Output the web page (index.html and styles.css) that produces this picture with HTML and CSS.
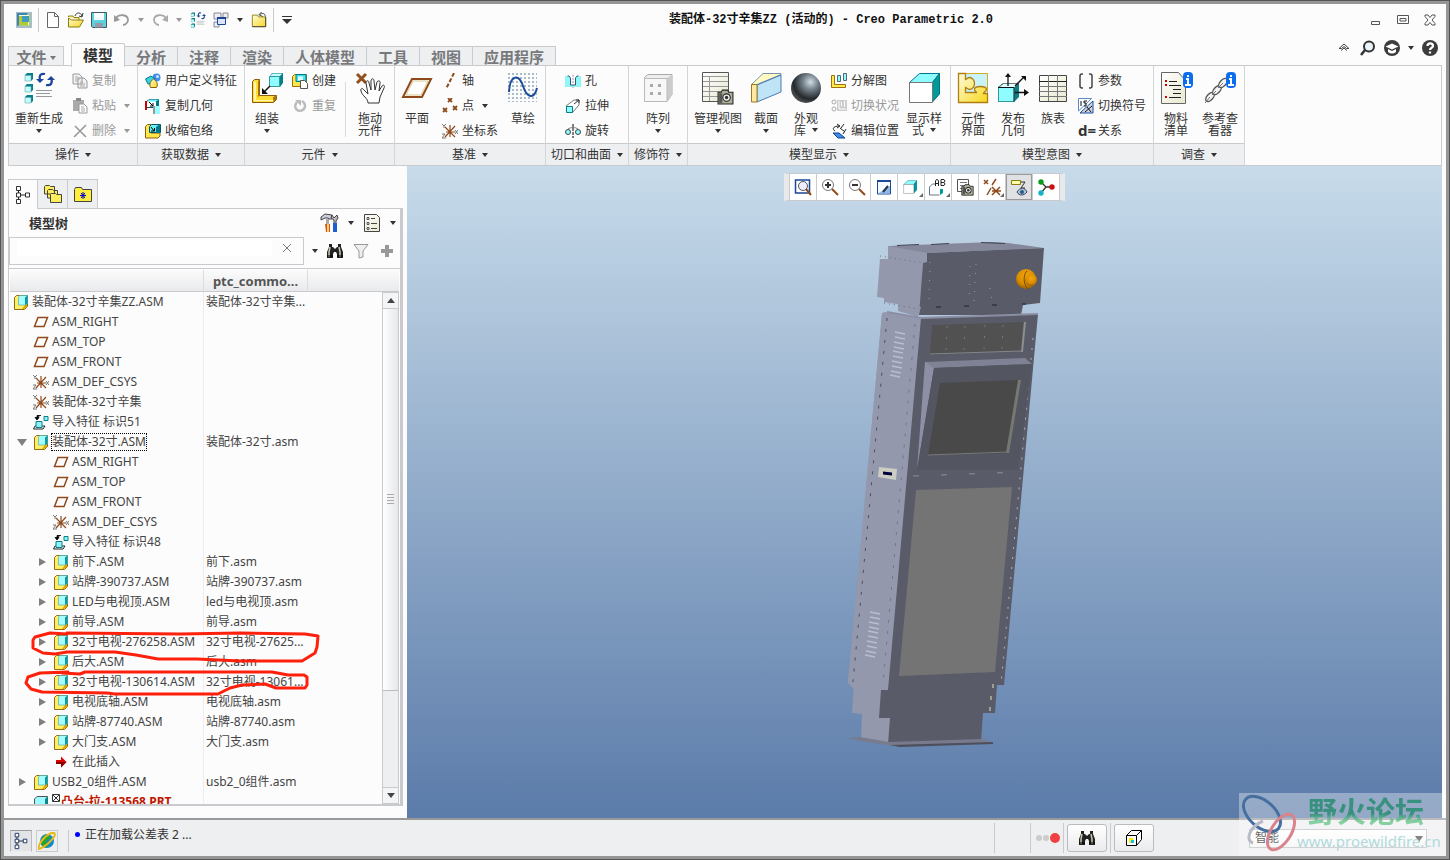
FILE: index.html
```html
<!DOCTYPE html>
<html lang="zh-CN">
<head>
  <meta charset="UTF-8">
  <meta name="viewport" content="width=device-width, initial-scale=1.0">
  <title>装配体-32寸辛集ZZ (活动的) - Creo Parametric 2.0</title>
  <link rel="stylesheet" href="styles.css">
</head>
<body>
  <!-- Shared icons -->
  <svg class="defs" aria-hidden="true">
    <defs>
      <linearGradient id="gold" x1="0" y1="0" x2="1" y2="1"><stop offset="0" stop-color="#fffbe0"/><stop offset="1" stop-color="#f7d81a"/></linearGradient>
      <linearGradient id="grid" x1="0" y1="0" x2="1" y2="1"><stop offset="0" stop-color="#fff"/><stop offset="1" stop-color="#e8e8d0"/></linearGradient>
      <radialGradient id="ball" cx=".65" cy=".3" r=".75"><stop offset="0" stop-color="#d3dde3"/><stop offset=".35" stop-color="#73808a"/><stop offset=".75" stop-color="#25292c"/><stop offset="1" stop-color="#555"/></radialGradient>
      <radialGradient id="amber" cx=".5" cy=".35" r=".7"><stop offset="0" stop-color="#f5a80c"/><stop offset=".6" stop-color="#d98c00"/><stop offset="1" stop-color="#8a5800"/></radialGradient>
      <pattern id="dots" width="4" height="4" patternUnits="userSpaceOnUse"><rect x="1" y="1" width="2" height="2" fill="#a9bccb"/></pattern>
    </defs>
    <symbol id="asm" viewBox="0 0 16 16"><path d="M1.500 3.500l2-2h11v11l-3 3h-10z" fill="#ffee66" stroke="#9a6a10"/><path d="M12 11l2-2v4l-3 2H9z" fill="#e2a800"/><path d="M5.500 3.500l1-2h8v8l-2 1.500h-7z" fill="#a5fdff" stroke="#3aa5ad" stroke-width=".6"/><path d="M12 3.500l2.500-2v8L12 11z" fill="#0a98a2"/></symbol>
    <symbol id="plane" viewBox="0 0 16 16"><path d="M5 3.500h9.500L11 12.500H1.500z" fill="none" stroke="#8f4a1c" stroke-width="1.500"/></symbol>
    <symbol id="csys" viewBox="0 0 16 16"><path d="M8 2v12M3 4l10 10M13 3L3 14M4 9h9" stroke="#8f4a1c" stroke-width="1.200"/><path d="M0 1l2 2 2-2M2 3v2M0 11h3l-3 4h4M13 7l3 4M16 7l-3 4" fill="none" stroke="#777"/></symbol>
    <symbol id="import" viewBox="0 0 16 16"><path d="M2 12L.5 15H10l2-3z" fill="#fff" stroke="#222"/><path d="M3 7.500h6v6H3z" fill="#8ff3f8" stroke="#067f88"/><path d="M11 2.500h4v4h-4z" fill="#8ff3f8" stroke="#067f88"/><path d="M8 1.500H4v2M2 3.500h4L4 6z" fill="#000" stroke="#000" stroke-width=".8"/></symbol>
    <symbol id="part" viewBox="0 0 16 16"><path d="M1.500 5L4 2.500h10.500V16h-13z" fill="#9cfbff" stroke="#555"/><path d="M12 5l2.500-2.500V16H12z" fill="#008f98"/></symbol>
    <symbol id="insert" viewBox="0 0 16 16"><path d="M3 6h5V2.500l5.500 5.500L8 13.500V10H3z" fill="#e00000"/><path d="M3 8h10.500L8 13.500V10H3z" fill="#8a0000"/></symbol>
    <symbol id="camera" viewBox="0 0 16 16"><path d="M1 4h3l1-2h5l1 2h4v11H1z" fill="#aeb09a" stroke="#222"/><path d="M2 5h3v9H2z" fill="#555"/><circle cx="9" cy="9" r="4" fill="#222"/><circle cx="9" cy="9" r="3" fill="#eee"/><circle cx="9" cy="9" r="1.600" fill="#333"/></symbol>
    <symbol id="binoc" viewBox="0 0 18 16"><path d="M3 1h3v3h1l2 2 2-2h1V1h3v3l2 5v6h-6v-4l-1-2H8l-1 2v4H1V9l2-5z" fill="#222"/><path d="M4 4L3 9v5M13 4l1 5v5" stroke="#c9c9b0" stroke-width="1.500" fill="none"/><path d="M1 13h6M11 13h6" stroke="#000"/></symbol>
    <symbol id="tree" viewBox="0 0 16 20"><path d="M1.500 1.500h4v4h-4zM1.500 8h4v4h-4zM1.500 14.500h4v4h-4zM10.500 8h4v4h-4z" fill="#fff" stroke="currentColor"/><path d="M3.500 5.500V8M3.500 12v2.500M5.500 10h5" stroke="#222"/></symbol>
    <symbol id="cube" viewBox="0 0 32 32"><path d="M1.500 10.500l10-9h20l-7 9z" fill="#8ffcff" stroke="#079"/><path d="M24.500 10.500l7-9V22l-7 8z" fill="#009a9c" stroke="#077"/><path d="M1.500 10.500h23v20h-23z" fill="#fff" stroke="#777"/></symbol>
    <symbol id="regen" viewBox="0 0 32 32"><path d="M2 3l2-2h6v6l-2 2H2zM2 14l2-2h6v6l-2 2H2zM2 25l2-2h6v6l-2 2H2z" fill="#067f88"/><path d="M2 3.500h6V9H2zM2 14.500h6V20H2zM2 25.500h6V31H2z" fill="#c4fdff" stroke="#6aa" stroke-width=".6"/><path d="M13 18.500h16M13 21.500h14M13 24.500h16" stroke="#999"/><path d="M22 2c-5-1-6 2-5 6M23 13c5 1 7-2 5-7" fill="none" stroke="#1c4699" stroke-width="2.200"/><path d="M13 7h8l-4 4zM24 8h8l-4-4z" fill="#1c4699"/></symbol>
    <symbol id="folder" viewBox="0 0 18 18"><path d="M1.500 5.500v-2h6l1 2h8v11h-15z" fill="url(#gold)" stroke="#8a7d10"/><path d="M1.500 16.500h15v-11" fill="none" stroke="#444"/></symbol>
    <symbol id="copy" viewBox="0 0 16 16"><path d="M1 1h6l3 3v7H1zM6 5h6l3 3v7H6z" fill="#f2f2f2" stroke="#999"/><path d="M3 4h3M3 6h5M3 8h3M8 9h3M8 11h5M8 13h5" stroke="#aaa"/></symbol>
  </svg>

  <header class="titlebar">
    <div class="quick">
      <svg class="app" viewBox="0 0 16 16"><path d="M0 0h16v16H0z" fill="#a9bcc7"/><path d="M1 1h11L2 14H1z" fill="#3d86b0"/><path d="M14 2v12H3z" fill="#a8d46e"/><path d="M3 3h10v10H3z" fill="#f3fae0"/><path d="M6 4h7v6H6z" fill="#3f9dc0"/><path d="M3 4h3v6h6v3H3z" fill="#b8c737"/></svg>
      <i class="sep"></i>
      <button title="新建"><svg viewBox="0 0 16 16"><path d="M2.500.5h7l4 4v11h-11z" fill="#fff" stroke="#666"/><path d="M9.500.5v4h4" fill="none" stroke="#666"/></svg></button>
      <button title="打开"><svg viewBox="0 0 16 16"><path d="M.5 5V4H5l1 1.500h5V8" fill="#ffee90" stroke="#8a7d10"/><path d="M.5 15V6l3 2h12l-4 7z" fill="url(#gold)" stroke="#8a7d10"/><path d="M7 4c1-4 6-4 7 0M15 1l-1 4-3-1" fill="none" stroke="#333"/></svg></button>
      <button title="保存"><svg viewBox="0 0 16 16"><path d="M.5.5h15v15H2l-1.500-1z" fill="#59d3de" stroke="#456"/><path d="M3 1h10v7H3z" fill="#f7fdfd"/><path d="M4 11h8v4.500H4z" fill="#99a"/></svg></button>
      <button title="撤消"><svg viewBox="0 0 16 16"><path d="M2 6c3-4 12-4 12 2 0 3-3 5-5 5" fill="none" stroke="#999" stroke-width="1.800"/><path d="M0 3v7l6-2z" fill="#999"/></svg></button><i class="arrow dim"></i>
      <button title="重做"><svg viewBox="0 0 16 16"><path d="M14 6C11 2 2 2 2 8c0 3 3 5 5 5" fill="none" stroke="#aaa" stroke-width="1.800"/><path d="M16 3v7l-6-2z" fill="#aaa"/></svg></button><i class="arrow dim"></i>
      <button title="重新生成"><svg viewBox="0 0 32 32"><use href="#regen"/></svg></button>
      <button title="窗口"><svg viewBox="0 0 16 16"><path d="M1 1h7v6H1zM10 1h5v5h-5zM1 10h5v5H1z" fill="#eee" stroke="#889"/><path d="M4.500 5.500h8v7h-8z" fill="#dce6fa" stroke="#1c4699"/><path d="M4 6h9" stroke="#1c4699" stroke-width="2"/></svg></button><i class="arrow"></i>
      <button title="关闭"><svg viewBox="0 0 18 18"><use href="#folder"/><path d="M16 5c0-4-4-4-6-2M12 0L9 3l4 2" fill="none" stroke="#333"/></svg></button>
      <i class="sep"></i>
      <button class="custom" title="自定义快速访问工具栏"><svg viewBox="0 0 10 10"><path d="M0 1.500h10" stroke="#333"/><path d="M0 4h10L5 9z" fill="#333"/></svg></button>
    </div>
    <h1>装配体-32寸辛集ZZ (活动的) - Creo Parametric 2.0</h1>
    <div class="winbtns">
      <button title="最小化"><svg viewBox="0 0 12 12"><path d="M1.500 7.500h8v3h-8z" fill="none" stroke="#555"/></svg></button>
      <button title="还原"><svg viewBox="0 0 12 12"><path d="M.5 1.500h11v8H.5zM3 4.500h6v2.500H3z" fill="none" stroke="#555"/></svg></button>
      <button title="关闭"><svg viewBox="0 0 12 12"><path d="M1 1h3l2 2.500L8 1h3v1.500L8 6l3 3.500V11H8L6 8.500 4 11H1V9.500L4 6 1 2.500z" fill="none" stroke="#555"/></svg></button>
    </div>
  </header>

  <nav class="tabs">
    <button class="file">文件<i class="arrow"></i></button>
    <button class="tab active">模型</button>
    <button class="tab">分析</button>
    <button class="tab">注释</button>
    <button class="tab">渲染</button>
    <button class="tab long">人体模型</button>
    <button class="tab">工具</button>
    <button class="tab">视图</button>
    <button class="tab long">应用程序</button>
    <div class="help">
      <button title="最小化功能区"><svg viewBox="0 0 16 16"><path d="M3 8.500L8 4l5 4.500h-2.500L8 6.500 5.500 8.500zM5 10.500l3-2.500 3 2.500" fill="none" stroke="#444"/></svg></button>
      <button title="搜索"><svg viewBox="0 0 16 16"><circle cx="9" cy="6.500" r="5" fill="#e9f5fa" stroke="#333" stroke-width="2"/><path d="M5 10l-4 5" stroke="#333" stroke-width="2.500"/></svg></button>
      <button title="学习"><svg viewBox="0 0 16 16"><circle cx="8" cy="8" r="8" fill="#3c3c3c"/><path d="M1.500 6.500L8 3.500l6.500 3L8 9.500z" fill="#fff"/><path d="M4 9v3c3 2 5 2 8 0V9l-4 2z" fill="#fff"/></svg></button>
      <i class="arrow"></i>
      <button title="帮助"><svg viewBox="0 0 16 16"><circle cx="8" cy="8" r="8" fill="#3c3c3c"/><path d="M5.500 6c0-3.500 5.500-3.500 5.500 0 0 2-3 1.500-3 4M8 11.500V13.500" fill="none" stroke="#fff" stroke-width="2.200"/></svg></button>
    </div>
  </nav>

  <section class="ribbon">
    <div class="group g-ops">
      <div class="items">
        <button class="big wide"><svg viewBox="0 0 32 32"><use href="#regen"/></svg><span>重新生成</span><i class="arrow"></i></button>
        <div class="stack">
          <button class="dim"><svg><use href="#copy"/></svg>复制</button>
          <button class="dim"><svg viewBox="0 0 16 16"><path d="M1 2h11v11H1z" fill="#aaa"/><path d="M4 0h5v3H4z" fill="#888"/><path d="M7 6h5l3 3v6H7z" fill="#fff" stroke="#999"/><path d="M9 9h3M9 11h4M9 13h4" stroke="#aaa"/></svg>粘贴<i class="arrow"></i></button>
          <button class="dim"><svg viewBox="0 0 16 16"><path d="M3 3l11 11M14 2L2 14" stroke="#999" stroke-width="1.600"/></svg>删除<i class="arrow"></i></button>
        </div>
      </div>
      <div class="caption">操作<i class="arrow"></i></div>
    </div>
    <div class="group g-data">
      <div class="items inset">
        <div class="stack">
          <button><svg viewBox="0 0 16 16"><circle cx="11.500" cy="4.500" r="4" fill="#3f8fee"/><circle cx="12.500" cy="3.500" r="1.500" fill="#cfe4fb"/><path d="M.5 6L6 3l4 3-4 5H3z" fill="#37d4dc" stroke="#078"/><path d="M8.500 6c3 2 5 5 3 8.500H5.500C4 11 5.500 8 8.500 6z" fill="url(#gold)" stroke="#8f5b0c"/></svg>用户定义特征</button>
          <button><svg viewBox="0 0 16 16"><path d="M1.500 3.500l3-2h9l-2 2v6h-10z" fill="#fff" stroke="#056"/><path d="M2 3.500l3-2h9l-2 2z" fill="#6af0f5"/><path d="M11 3.500l3-2V8h-3z" fill="#078"/><path d="M1 3v9" stroke="#c00" stroke-width="2"/><path d="M8 8h7v8H8z" fill="#9cfdff"/><path d="M8 8h2v8H8z" fill="#999"/><path d="M4 4l4 4M8 5v3H5" stroke="#000" fill="none"/></svg>复制几何</button>
          <button><svg viewBox="0 0 16 16"><path d="M.5 3.500l2-2H6V10h9v3l-2 2H.5z" fill="#ffe94a" stroke="#8f5b0c"/><path d="M4.500 3.500l2-2h9v8h-11z" fill="#6af0f5" stroke="#056"/><path d="M11 4l4-3v9h-4z" fill="#078"/><path d="M6 4l3 4M9.500 5v3H6" stroke="#000" fill="none"/></svg>收缩包络</button>
        </div>
      </div>
      <div class="caption">获取数据<i class="arrow"></i></div>
    </div>
    <div class="group g-comp">
      <div class="items">
        <button class="big"><svg viewBox="0 0 32 32"><path d="M1.500 9.500l2-2h5v16h17v4l-3 3h-21z" fill="#ffdf35" stroke="#8f5b0c"/><path d="M7 9l1.500-1.500V24L7 25zM22 25l3.500-1.500v4l-3 3z" fill="#a87410"/><path d="M3 10h2v18h17v1H3z" fill="#fff5b0"/><path d="M18 5l3-4h11v10l-3 4z" fill="#067f88"/><path d="M18.500 4.500l3-3h10l-3 3z" fill="#c4fdff"/><path d="M18.500 4.500h10v10h-10z" fill="#8ffcff" stroke="#399"/><path d="M19 14l-7 7" stroke="#111" stroke-width="1.500"/><path d="M11 16v6h6z" fill="#111"/></svg><span>组装</span><i class="arrow"></i></button>
        <div class="stack">
          <button><svg viewBox="0 0 16 16"><path d="M.5 3.500l2-2h12v9l-2 3H.5z" fill="#ffe94a" stroke="#a07010"/><path d="M4 1.500h10v7H4z" fill="#40e5ec" stroke="#078"/><path d="M6 3.500h5v4H6z" fill="#e8feff"/><path d="M8.500 7.500h4l3 3v5h-7z" fill="#fff" stroke="#555"/></svg>创建</button>
          <button class="dim"><svg viewBox="0 0 16 16"><path d="M5 4c-5 6 2 12 7 7 2-3 1-6-2-8" fill="none" stroke="#bbb" stroke-width="2.500"/><path d="M3 2h6v6z" fill="#bbb"/></svg>重复</button>
        </div>
        <i class="divider"></i>
        <button class="big"><svg viewBox="0 0 32 32"><path d="M3 2l9 9M12 2l-9 9" stroke="#934f1e" stroke-width="3"/><path d="M14 31c0-5-6-7-7-12-1-3 2-3 3-1l4 4-2-11c0-3 3-3 3 0l2 7V9c0-3 3-3 3 0l1 9 2-8c1-2 4-1 3 1l-1 8 3-5c2-2 3 0 2 2l-4 9-1 6z" fill="#fff" stroke="#333"/></svg><span>拖动<br>元件</span></button>
      </div>
      <div class="caption">元件<i class="arrow"></i></div>
    </div>
    <div class="group g-datum">
      <div class="items">
        <button class="big"><svg viewBox="0 0 32 32"><path d="M11 7h19L21 25H2z" fill="#fff" stroke="#8f4a1c" stroke-width="2"/><path d="M12 9h15l-7 14H5z" fill="none" stroke="#d9c98c"/></svg><span>平面</span></button>
        <div class="stack">
          <button><svg viewBox="0 0 16 16"><path d="M12 0L4 16" stroke="#8f4a1c" stroke-width="2" stroke-dasharray="4 2"/></svg>轴</button>
          <button><svg viewBox="0 0 16 16"><path d="M6 0l4 4M10 0L6 4M1 10l4 4M5 10l-4 4M11 8l4 4M15 8l-4 4" stroke="#8f4a1c" stroke-width="1.800"/></svg>点<i class="arrow"></i></button>
          <button><svg><use href="#csys"/></svg>坐标系</button>
        </div>
        <button class="big"><svg viewBox="0 0 32 32"><path d="M1 1h29v29H1z" fill="url(#dots)"/><path d="M2 20C3 2 12 2 16 14s11 14 14 2" fill="none" stroke="#1d4c9c" stroke-width="2"/></svg><span>草绘</span></button>
      </div>
      <div class="caption">基准<i class="arrow"></i></div>
    </div>
    <div class="group g-cut">
      <div class="items center">
        <div class="stack">
          <button><svg viewBox="0 0 16 16"><path d="M0 3h16v11H0z" fill="#8ff6fa"/><path d="M3 3h10l-2 2v7H5V5z" fill="#fff"/><path d="M2.500 3H4l1.500 2v7h5V5L12 3h1.500" fill="none" stroke="#357"/><path d="M8 2v13" stroke="#999" stroke-dasharray="2 1"/></svg>孔</button>
          <button><svg viewBox="0 0 16 16"><path d="M1 8l8-6h5v5l-7 8z" fill="#fff" stroke="#777"/><path d="M1.500 8.500h6v6h-6z" fill="#8ffcff" stroke="#067f88"/><path d="M9 6l5-4M11 2h3v3" fill="none" stroke="#333"/></svg>拉伸</button>
          <button><svg viewBox="0 0 16 16"><circle cx="3" cy="9" r="2.500" fill="#8ffcff" stroke="#444"/><circle cx="13" cy="9" r="2.500" fill="#8ffcff" stroke="#444"/><path d="M8 1v14" stroke="#000" stroke-dasharray="3 1"/><path d="M3 6c3-2 7-2 10 0" fill="none" stroke="#777"/></svg>旋转</button>
        </div>
      </div>
      <div class="caption">切口和曲面<i class="arrow"></i></div>
    </div>
    <div class="group g-mod">
      <div class="items center">
        <button class="big"><svg viewBox="0 0 32 32"><path d="M2.500 5.500L6 2.500h24v20l-5 7H2.500z" fill="#eee" stroke="#aaa"/><path d="M25 6l5-3v20l-5 6z" fill="#ccc"/><path d="M2.500 6.500H25v23H2.500z" fill="#f7f7f7" stroke="#bbb"/><path d="M8 12h3v3H8zM16 12h3v3h-3zM8 20h3v3H8zM16 20h3v3h-3z" fill="#aaa"/></svg><span>阵列</span><i class="arrow"></i></button>
      </div>
      <div class="caption">修饰符<i class="arrow"></i></div>
    </div>
    <div class="group g-disp">
      <div class="items">
        <button class="big wide"><svg viewBox="0 0 32 32"><path d="M.5.500h26v29H.5z" fill="url(#grid)" stroke="#555"/><path d="M1 4.500h25M1 9.500h25M1 14.500h25M1 19.500h25M1 24.500h25M7.500 4v25" stroke="#999"/><use href="#camera" x="15" y="16" width="17" height="17"/></svg><span>管理视图</span><i class="arrow"></i></button>
        <button class="big slim"><svg viewBox="0 0 32 32"><path d="M1.500 12.500L13 1.500h18v1L7 12.500z" fill="#fffac0" stroke="#7a93b5"/><path d="M7 13L31 3v17L7 30z" fill="#bfe4f5" stroke="#4a79b5"/><path d="M1.500 12.500h5.500V30H1.500z" fill="#ffe9a0" stroke="#9a7a20"/></svg><span>截面</span><i class="arrow"></i></button>
        <button class="big"><svg viewBox="0 0 32 32"><circle cx="16" cy="16" r="15" fill="url(#ball)"/></svg><span>外观<br>库 <i class="arrow"></i></span></button>
        <div class="stack">
          <button><svg viewBox="0 0 16 16"><path d="M.5 2.500h3v9h11v3H.5z" fill="#ffe94a" stroke="#a07010"/><path d="M6.500 2.500h3v6h-3zM12.500.500h3v7h-3z" fill="#8ffcff" stroke="#567"/></svg>分解图</button>
          <button class="dim"><svg viewBox="0 0 16 16"><circle cx="3" cy="4" r="2" fill="none" stroke="#aaa"/><circle cx="3" cy="11" r="2" fill="none" stroke="#aaa"/><path d="M6 2h10v11H6z" fill="#ccc"/><path d="M8 3v8h7M10.500 4v4M13.500 3v6" stroke="#fff" fill="none"/></svg>切换状况</button>
          <button><svg viewBox="0 0 16 16"><path d="M2 10h6l6 5H7z" fill="#3b8cf0" stroke="#123f8c"/><path d="M4 8c-4-3 0-5 4-5M6 1l3 2-3 2M9 5l5 4M13 1l-3 4M15 6l-3 5" fill="none" stroke="#222"/></svg>编辑位置</button>
        </div>
        <button class="big"><svg><use href="#cube"/></svg><span>显示样<br>式 <i class="arrow"></i></span></button>
      </div>
      <div class="caption">模型显示<i class="arrow"></i></div>
    </div>
    <div class="group g-intent">
      <div class="items">
        <button class="big"><svg viewBox="0 0 32 32"><path d="M1.500 1.500h29v29h-29z" fill="#c8f3f8" stroke="#d2ab29"/><path d="M1.500 1.500h7v6c1 0 2-2 4-2 3 0 5 3 5 6s-2 6-5 6c-2 0-3-2-4-2v5h11c0-1-2-1-2-3 0-2 3-3 6-3s6 1 6 3c0 2-3 2-3 4h4v9h-29z" fill="url(#gold)" stroke="#b07d10" stroke-width="1.300"/></svg><span>元件<br>界面</span></button>
        <button class="big slim"><svg viewBox="0 0 32 32"><path d="M1 15l5-4h16v14l-5 5H1z" fill="#067f88"/><path d="M1.500 15.500h16v14h-16z" fill="#8ffcff" stroke="#399"/><path d="M1.500 15.500l5-4h15l-4 4z" fill="#dff" stroke="#777"/><path d="M1 15.500h16v14" fill="none" stroke="#111"/><path d="M11 14V4M18 14l9-9M18 20.500h10" stroke="#111" stroke-width="1.300"/><path d="M8 5h6l-3-4zM24 4h5v5zM27 17v7l5-3.500z" fill="#111"/></svg><span>发布<br>几何</span></button>
        <button class="big"><svg viewBox="0 0 32 32"><path d="M2.500 3.500h27v26h-27z" fill="url(#grid)" stroke="#444"/><path d="M2 9.500h28" stroke="#222"/><path d="M2 14.500h28M2 19.500h28M2 24.500h28M11.500 3v26M20.500 3v26" stroke="#777"/></svg><span>族表</span></button>
        <div class="stack">
          <button><svg viewBox="0 0 16 16"><path d="M5 1H4Q2 1 2 3v10q0 2 2 2h1M11 1h1q2 0 2 2v10q0 2-2 2h-1" fill="none" stroke="#444" stroke-width="1.500"/></svg>参数</button>
          <button><svg viewBox="0 0 16 16"><path d="M.5.500h13L.5 13z" fill="#fff" stroke="#5c8ac8"/><path d="M15 3v12H2z" fill="#ccd6e8" stroke="#1c4699"/><path d="M3 3v5M9 3H6v2h2v3H6M7 14l7-6M9 9l4 5" stroke="#111" fill="none"/></svg>切换符号</button>
          <button><b class="glyph">d=</b>关系</button>
        </div>
      </div>
      <div class="caption">模型意图<i class="arrow"></i></div>
    </div>
    <div class="group g-check">
      <div class="items">
        <button class="big"><svg viewBox="0 0 32 32"><path d="M1.500.500h17l7 8v23h-24z" fill="url(#grid)" stroke="#666"/><path d="M5 8h2v2H5zM5 12h2v2H5zM5 24h2v2H5z" fill="#c00"/><path d="M9 9.500h8M13 17.500h8M9 13.500h12M13 21.500h8M9 25.500h12" stroke="#222"/><rect x="23" width="10" height="16" rx="4" fill="#0b6ef0"/><path d="M28 3v2M26 7h2v6M25 13h6" stroke="#fff" stroke-width="2" fill="none"/></svg><span>物料<br>清单</span></button>
        <button class="big"><svg viewBox="0 0 32 32"><g fill="#f4f4f4" stroke="#555" stroke-width="1.300"><ellipse cx="6" cy="25" rx="3" ry="5.500" transform="rotate(42 6 25)"/><ellipse cx="13" cy="18" rx="3" ry="5.500" transform="rotate(42 13 18)"/><ellipse cx="19" cy="11" rx="3" ry="5.500" transform="rotate(42 19 11)"/></g><path d="M1 31l5-6M8 23l4-4M14 16l5-5" stroke="#777"/><rect x="22" width="10" height="16" rx="4" fill="#0b6ef0"/><path d="M27 3v2M25 7h2v6M24 13h6" stroke="#fff" stroke-width="2" fill="none"/></svg><span>参考查<br>看器</span></button>
      </div>
      <div class="caption">调查<i class="arrow"></i></div>
    </div>
  </section>

  <main>
    <aside>
      <div class="sidetabs">
        <button class="active" title="模型树"><svg viewBox="0 0 16 20"><use href="#tree"/></svg></button>
        <button title="文件夹浏览器"><svg viewBox="0 0 18 18"><path d="M.5 9V1.500l1-1h4l1 1h4V9zM3.500 13V5.500l1-1h4l1 1h4V13z" fill="#ffee5c" stroke="#444"/><path d="M6.500 17.500v-8l1-1h4l1 1h5v8z" fill="#ffee5c" stroke="#444"/></svg></button>
        <button title="收藏夹"><svg viewBox="0 0 18 18"><path d="M.5 16.500v-12l1-2h6l1 2h9v12z" fill="#ffee3c" stroke="#444"/><path d="M9 7v7M6 10.500h6M7 8l4 5M11 8l-4 5" stroke="#00c"/></svg></button>
      </div>
      <div class="treebox">
        <div class="treehead">
          <h2>模型树</h2>
          <button title="设置"><svg viewBox="0 0 20 20"><path d="M1 4l4-3 7 1v4H9l-1-1H5L1 7z" fill="#ccd" stroke="#444"/><path d="M6 6h3v5H6z" fill="#aaa"/><path d="M5 11h5v8H6z" fill="#d9541e"/><path d="M7 11h2v8H7z" fill="#ffd070"/><path d="M12 2l2 3 3-3 1 3-2 3v4h-2V7l-3-2z" fill="#bbb" stroke="#444"/><path d="M13 10h4v9h-4z" fill="#1c5fd0"/></svg></button><i class="arrow"></i>
          <button title="显示"><svg viewBox="0 0 20 20"><path d="M2.500 1.500h12l3 3v14h-15z" fill="url(#grid)" stroke="#444"/><path d="M9 5.500h4M9 10.500h6M9 15.500h6" stroke="#444"/><path d="M5 4.500h2v2H5zM5 9.500h2v2H5zM5 14.500h2v2H5z" fill="none" stroke="#555"/></svg></button><i class="arrow"></i>
        </div>
        <div class="search">
          <div class="field"><input type="text" aria-label="搜索模型树"><button title="清除"><svg viewBox="0 0 10 10"><path d="M1 1l8 8M9 1L1 9" stroke="#777"/></svg></button></div>
          <i class="arrow"></i>
          <button title="查找"><svg><use href="#binoc"/></svg></button>
          <button title="过滤"><svg viewBox="0 0 18 16"><path d="M2 1.500h14L11 8v6l-4 1V8z" fill="#eee" stroke="#999"/></svg></button>
          <button title="添加"><svg viewBox="0 0 18 16"><path d="M9 2v12M3 8h12" stroke="#999" stroke-width="4"/></svg></button>
        </div>
        <div class="treelist">
          <table>
            <thead><tr><th></th><th>ptc_commo...</th><th></th></tr></thead>
            <tbody>
              <tr class="l0"><td><svg><use href="#asm"/></svg>装配体-32寸辛集ZZ.ASM</td><td>装配体-32寸辛集...</td><td></td></tr>
              <tr class="l1"><td><i></i><svg><use href="#plane"/></svg>ASM_RIGHT</td><td></td><td></td></tr>
              <tr class="l1"><td><i></i><svg><use href="#plane"/></svg>ASM_TOP</td><td></td><td></td></tr>
              <tr class="l1"><td><i></i><svg><use href="#plane"/></svg>ASM_FRONT</td><td></td><td></td></tr>
              <tr class="l1"><td><i></i><svg><use href="#csys"/></svg>ASM_DEF_CSYS</td><td></td><td></td></tr>
              <tr class="l1"><td><i></i><svg><use href="#csys"/></svg>装配体-32寸辛集</td><td></td><td></td></tr>
              <tr class="l1"><td><i></i><svg><use href="#import"/></svg>导入特征 标识51</td><td></td><td></td></tr>
              <tr class="l1"><td><i class="open"></i><svg><use href="#asm"/></svg><span class="focus">装配体-32寸.ASM</span></td><td>装配体-32寸.asm</td><td></td></tr>
              <tr class="l2"><td><i></i><svg><use href="#plane"/></svg>ASM_RIGHT</td><td></td><td></td></tr>
              <tr class="l2"><td><i></i><svg><use href="#plane"/></svg>ASM_TOP</td><td></td><td></td></tr>
              <tr class="l2"><td><i></i><svg><use href="#plane"/></svg>ASM_FRONT</td><td></td><td></td></tr>
              <tr class="l2"><td><i></i><svg><use href="#csys"/></svg>ASM_DEF_CSYS</td><td></td><td></td></tr>
              <tr class="l2"><td><i></i><svg><use href="#import"/></svg>导入特征 标识48</td><td></td><td></td></tr>
              <tr class="l2"><td><i class="shut"></i><svg><use href="#asm"/></svg>前下.ASM</td><td>前下.asm</td><td></td></tr>
              <tr class="l2"><td><i class="shut"></i><svg><use href="#asm"/></svg>站牌-390737.ASM</td><td>站牌-390737.asm</td><td></td></tr>
              <tr class="l2"><td><i class="shut"></i><svg><use href="#asm"/></svg>LED与电视顶.ASM</td><td>led与电视顶.asm</td><td></td></tr>
              <tr class="l2"><td><i class="shut"></i><svg><use href="#asm"/></svg>前导.ASM</td><td>前导.asm</td><td></td></tr>
              <tr class="l2"><td><i class="shut"></i><svg><use href="#asm"/></svg>32寸电视-276258.ASM</td><td>32寸电视-27625...</td><td></td></tr>
              <tr class="l2"><td><i class="shut"></i><svg><use href="#asm"/></svg>后大.ASM</td><td>后大.asm</td><td></td></tr>
              <tr class="l2"><td><i class="shut"></i><svg><use href="#asm"/></svg>32寸电视-130614.ASM</td><td>32寸电视-13061...</td><td></td></tr>
              <tr class="l2"><td><i class="shut"></i><svg><use href="#asm"/></svg>电视底轴.ASM</td><td>电视底轴.asm</td><td></td></tr>
              <tr class="l2"><td><i class="shut"></i><svg><use href="#asm"/></svg>站牌-87740.ASM</td><td>站牌-87740.asm</td><td></td></tr>
              <tr class="l2"><td><i class="shut"></i><svg><use href="#asm"/></svg>大门支.ASM</td><td>大门支.asm</td><td></td></tr>
              <tr class="l2"><td><i></i><svg><use href="#insert"/></svg>在此插入</td><td></td><td></td></tr>
              <tr class="l1"><td><i class="shut"></i><svg><use href="#asm"/></svg>USB2_0组件.ASM</td><td>usb2_0组件.asm</td><td></td></tr>
              <tr class="l1 failed"><td><i></i><svg><use href="#part"/></svg><svg class="mark" viewBox="0 0 8 8"><path d="M.5.500h7v7h-7zM1 1l6 6M7 1L1 7" fill="none" stroke="#333"/></svg>凸台-拉-113568.PRT</td><td></td><td></td></tr>
            </tbody>
          </table>
          <div class="scroll">
            <div class="corner"></div>
            <button class="up" title="向上"></button>
            <div class="track"><div class="thumb"></div></div>
            <button class="down" title="向下"></button>
          </div>
          <!-- Red pen marks around the two 32寸电视 rows -->
          <svg class="pen" viewBox="22 628 300 72"><g fill="none" stroke="#ff200c" stroke-width="3" stroke-linejoin="round" stroke-linecap="round"><path d="M67 634L50 633L35 637L33 640V648L43 653L55 654L67 652H115L136 655L158 659H197L240 661H302L315 653L317 647L318 636L305 634L240 633L180 634L67 633"/><path d="M68 672L40 673L28 677L26 683L31 689L42 692L107 693L115 694H218L230 688L242 685L265 684L276 688H305L307 685V677L304 675H288L272 672H85L80 674L62 673"/></g></svg>
        </div>
      </div>
    </aside>

    <section class="viewport">
      <div class="viewbar">
        <button title="重新调整"><svg viewBox="0 0 18 18"><path d="M1.500 2h14v13h-14z" fill="#fff" stroke="#1c4699" stroke-width="1.500"/><circle cx="9" cy="8" r="4.500" fill="#eef" stroke="#555"/><path d="M12 11l5 6" stroke="#8f4a1c" stroke-width="2"/></svg></button>
        <button title="放大"><svg viewBox="0 0 18 18"><circle cx="7" cy="7" r="5.500" fill="#fff" stroke="#777"/><path d="M4 7h6M7 4v6" stroke="#333" stroke-width="2"/><path d="M11 11l6 6" stroke="#8f4a1c" stroke-width="2"/></svg></button>
        <button title="缩小"><svg viewBox="0 0 18 18"><circle cx="7" cy="7" r="5.500" fill="#fff" stroke="#777"/><path d="M4 7h6" stroke="#333" stroke-width="2"/><path d="M11 11l6 6" stroke="#8f4a1c" stroke-width="2"/></svg></button>
        <button title="重画"><svg viewBox="0 0 18 18"><path d="M2.500 3h13v13h-13z" fill="#f4faff" stroke="#1c4699"/><path d="M2 3h14" stroke="#1c4699" stroke-width="2"/><path d="M3 15.500L15 8v7.500z" fill="#8db8e8"/><path d="M8 14l5-6" stroke="#234" stroke-width="2"/></svg></button>
        <button class="more" title="显示样式"><svg viewBox="-2 -4 38 38"><use href="#cube" width="30" height="30"/></svg></button>
        <button class="more" title="已保存方向"><svg viewBox="0 0 18 18"><path d="M.5 17V9l3-3h3M.5 17h10" fill="none" stroke="#678"/><path d="M11 11h3v4l-3 2z" fill="#009a9c"/><path d="M6.500 8V3l1-1.500h1l1 1.500v5M6.500 5.500h3M12 1.500v6h3l1-1.500-1-1.500h-3M12 1.500h3L16 3l-1 1.500" fill="none" stroke="#222"/></svg></button>
        <button title="视图管理器"><svg viewBox="0 0 18 18"><path d="M1.500 1.500h11v12h-11z" fill="#fff" stroke="#555"/><path d="M4 4.500h7M4 7.500h7M4 10.500h3" stroke="#777"/><use href="#camera" x="5" y="5" width="13" height="13"/></svg></button>
        <button class="more" title="基准显示"><svg viewBox="0 0 18 18"><path d="M1 2l4 4M5 2L1 6M13 1L9 7M8 10l-4 7M9 9l8 8M17 9l-8 8M9 13h9" stroke="#8f4a1c" stroke-width="1.500"/></svg></button>
        <button class="on" title="注释显示"><svg viewBox="0 0 18 18"><path d="M1.500 2.500h9v4h-9z" fill="#ffffa8" stroke="#8a7d10"/><path d="M11 4h4l-4 6h4" fill="none" stroke="#333"/><path d="M7 14c3-5 8-5 10 0-3 4-8 4-10 0z" fill="#a9c4dc" stroke="#445"/><circle cx="12" cy="14" r="2" fill="#2a5a8a"/></svg></button>
        <button title="旋转中心"><svg viewBox="0 0 18 18"><path d="M4 4l5 5-5 6M9 9h6" fill="none" stroke="#333" stroke-width="1.300"/><circle cx="4" cy="4" r="2.700" fill="#0a9a1a"/><circle cx="15" cy="9" r="2.700" fill="#d01010"/><circle cx="4" cy="15" r="2.700" fill="#12b5c5"/></svg></button>
      </div>
      <svg class="model" viewBox="804 240 241 510" role="img" aria-label="装配体模型">
        <!-- top box -->
        <path d="M888 246l104-4 16 1 36 5-117 5v10l-40-7h1z" fill="#85889b"/>
        <path d="M888 246l39 7v10l-4 1-2 44-37-6v-4l-7-1 3-38h8z" fill="#9498ad"/>
        <path d="M927 253l117-5-4 55-17 2-2 10h-102l4-52 4-1z" fill="#5a5b69"/>
        <path d="M898 302l23 5-3 10-20-6z" fill="#9498ad"/>
        <path d="M880 256l43 7M884 303l35 6" stroke="#6b6e80" stroke-dasharray="1 4" fill="none"/>
        <path d="M897 245.500l22-1M931 244.500l18-1M981 242.500l24 1" stroke="#414352"/>
        <path d="M936 307h5M964 306h5M992 305h5M1022 304h4" stroke="#222"/>
        <path d="M970 266l-1 34M976 264l-2 40M990 288l2 12M930 262l-1 40" stroke="#9498ad" stroke-dasharray="1 8"/>
        <circle cx="1026" cy="279" r="10" fill="url(#amber)"/><path d="M1027 271c-4 4-4 13 1 18" fill="none" stroke="#6f4700"/><circle cx="1031" cy="280" r="6" fill="url(#amber)"/>
        <!-- side face -->
        <path d="M882 313l3-1 37 7-4 39-30 330-34 1-6-6z" fill="#9498ad"/>
        <path d="M882 314l-34 369h6l-2 30 10 1-1 26 29 4 3-60 30-365z" fill="#9498ad"/>
        <!-- front face -->
        <path d="M921 318l117-4-34 371h-7l-2 28h-12l-2 28-93 3 2-26h-11l2-28h7z" fill="#5a5b69"/>
        <path d="M887 312l34 6 117-4" fill="none" stroke="#8b8ea2" stroke-width="2"/>
        <path d="M887 318l-34 364" stroke="#4c4e60" stroke-dasharray="3 8"/><path d="M915 324l-32 360" stroke="#747789" stroke-dasharray="3 8"/>
        <path d="M1033 338l-32 346M1022 374l-10 96" stroke="#aeb1bf" stroke-dasharray="2 8"/>
        <path d="M932 325l91-3-2 29-91 4z" fill="#515151"/><path d="M1024 322h2l-3 30h-2z" fill="#8c8f8f"/><path d="M930 354l91-3" stroke="#85878f"/>
        <path d="M947 326l-1 25M965 326l-1 25M985 325l-1 25M1003 325l-1 25" stroke="#777" stroke-dasharray="2 9"/>
        <path d="M926 362l99-4 7 6-98 4z" fill="#7f8195"/><path d="M926 362l8 6-17 102 8-108z" fill="#8d90a5"/>
        <path d="M934 368l98-4-14 106-101 0z" fill="#535561"/>
        <path d="M940 383l79-3-12 73-79 2z" fill="#494949"/><path d="M1018 380h3l-12 73h-3z" fill="#75796f"/><path d="M928 455l80-3" stroke="#777a78"/>
        <path d="M913 476l110-4" stroke="#8d90a0" stroke-dasharray="6 22"/>
        <path d="M916 490l96-3-17 185-96 4z" fill="#747474"/>
        <g stroke="#b9bdd2" stroke-width="1.500"><path id="slots" d="M895 332l10 2M895 337l10 2M894 342l10 2M894 347l10 2M893 351l10 2M893 356l10 2M892 361l10 2M892 366l10 2M891 371l10 2M890 375l10 2"/><use href="#slots" x="-25" y="280"/></g>
        <path d="M879 467l18 2-1 11-18-3z" fill="#cbccc2"/><path d="M883 471.500l9 1v3l-9-1z" fill="#00003a"/>
        <path d="M993 684v4M991 696v4M990 707v4" stroke="#dfe2c2"/>
        <!-- base plate -->
        <path d="M848 738l12-1 29 5 94-3 10 4-92 4-40-6z" fill="#787b8e"/><path d="M890 745l103-3v2l-93 3z" fill="#4d4f5c"/>
      </svg>
    </section>
  </main>

  <footer>
    <button class="mini on" title="显示导航器"><svg viewBox="0 0 16 20"><use href="#tree"/></svg></button>
    <button class="mini" title="显示浏览器"><svg viewBox="0 0 18 18"><circle cx="9" cy="9" r="7" fill="#1688d0"/><path d="M4 5l5-3 4 4-5 3 3 4-4 3-4-5z" fill="#25a52b"/><path d="M1 17C-1 12 10 0 16 1c4 2-7 13-15 16z" fill="none" stroke="#e8b914" stroke-width="2"/></svg></button>
    <i class="sep"></i>
    <p><i class="dot"></i>正在加载公差表 2 ...</p>
    <div class="status">
      <i class="sep"></i><i class="sep second"></i>
      <span class="lights"><i></i><i></i><i></i></span>
      <i class="sep"></i>
      <button title="查找"><svg><use href="#binoc"/></svg></button>
      <i class="sep"></i>
      <button title="选择"><svg viewBox="0 0 18 16"><path d="M1.500 5.500h10v10h-10zM1.500 5.500l5-5h10v9l-5 6M11.500 5.500l5-5" fill="#fff" stroke="#000"/><path d="M4 8h4v5H4z" fill="#fe0"/><path d="M6 10h3v3H6z" fill="#0ce"/></svg></button>
      <div class="filter"><select aria-label="选择过滤器"><option>智能</option></select></div>
    </div>
  </footer>

  <div class="watermark">
    <svg viewBox="0 0 60 62"><g fill="none"><ellipse cx="23" cy="21" rx="13" ry="22" transform="rotate(-48 23 21)" stroke="#456f9f" stroke-width="3"/><ellipse cx="42" cy="39" rx="10" ry="20" transform="rotate(32 42 39)" stroke="#d9848d" stroke-width="3"/><path d="M24 28c-14 6-18 20-10 22" stroke="#b8bcc8" stroke-width="3"/></g></svg>
    <div><strong>野火论坛</strong><span>www.proewildfire.cn</span></div>
  </div>
</body>
</html>
```
FILE: styles.css
```css
* {
  margin: 0;
  padding: 0;
  box-sizing: border-box;
}

body {
  font-family: "Noto Sans", "Noto Sans CJK SC", sans-serif;
  font-size: 12px;
  line-height: 16px;
  color: #333;
  background-color: #fcfcfc;
  height: 100vh;
  border: 4px solid #959595;
  outline: 1px solid #555;
  outline-offset: -1px;
  display: flex;
  flex-direction: column;
  overflow: hidden;
  position: relative;
}

button {
  font: inherit;
  color: inherit;
  border: none;
  background: none;
}

svg {
  display: block;
  flex: none;
}

.defs {
  position: absolute;
  width: 0;
  height: 0;
}

.arrow {
  display: inline-block;
  flex: none;
  border: 3px solid transparent;
  border-top: 4px solid #333;
  border-bottom: none;
}

.arrow.dim,
.dim .arrow {
  border-top-color: #999;
}

.sep {
  flex: none;
  width: 1px;
  background-color: #c8cacd;
}

/* Title bar */
.titlebar {
  display: flex;
  align-items: center;
  height: 38px;
  flex: none;
  padding: 0 10px 6px 12px;
}

.quick {
  display: flex;
  align-items: center;
  gap: 7px;
}

.quick svg {
  width: 16px;
  height: 16px;
}

.quick .sep {
  height: 24px;
  margin: 0 -1px;
}

.quick .arrow {
  margin: 0 1px;
}

.quick .custom {
  margin-left: 2px;
}

.quick .custom svg {
  width: 10px;
  height: 10px;
}

h1 {
  flex: 1;
  text-align: center;
  font: bold 12px/16px "Liberation Mono", "Noto Sans CJK SC", monospace;
  color: #111;
}

.winbtns {
  display: flex;
  gap: 15px;
}

.winbtns svg {
  width: 12px;
  height: 12px;
}

/* Ribbon tabs */
.tabs {
  display: flex;
  align-items: flex-end;
  height: 24px;
  flex: none;
  padding: 0 4px;
}

.tabs > button {
  height: 20px;
  font-size: 15px;
  line-height: 18px;
  font-weight: bold;
  color: #77797c;
  background-color: #eeeff1;
  border: 1px solid #c8cacd;
  border-bottom: none;
}

.tabs .file {
  width: 56px;
  margin-right: 7px;
}

.file .arrow {
  margin: 0 0 3px 3px;
  border-top-color: #77797c;
}

.tabs .tab {
  width: 53px;
  border-left: none;
}

.tabs .long {
  width: 83px;
}

.tabs .active {
  height: 24px;
  width: 54px;
  padding-bottom: 1px;
  margin-bottom: -1px;
  color: #333;
  background-color: #fcfcfc;
  border: 1px solid #c8cacd;
  border-bottom: none;
  border-radius: 2px 2px 0 0;
  position: relative;
  z-index: 1;
}

.help {
  display: flex;
  align-items: center;
  gap: 8px;
  margin-left: auto;
  padding-right: 4px;
  height: 36px;
}

.help svg {
  width: 16px;
  height: 16px;
}

/* Ribbon */
.ribbon {
  display: flex;
  flex: none;
  height: 101px;
  margin: -1px 4px 0;
  border: 1px solid #c8cacd;
}

.group {
  flex: none;
  display: flex;
  flex-direction: column;
  border-right: 1px solid #d3d5d8;
}

.g-ops { width: 129px; }
.g-data { width: 107px; }
.g-comp { width: 150px; }
.g-datum { width: 151px; }
.g-cut { width: 83px; }
.g-mod { width: 59px; }
.g-disp { width: 263px; }
.g-intent { width: 203px; }
.g-check { width: 91px; }

.items {
  flex: 1;
  display: flex;
}

.items.inset {
  padding-left: 4px;
}

.items.center {
  justify-content: center;
}

.big {
  width: 44px;
  padding-top: 6px;
  line-height: 12px;
  display: flex;
  flex-direction: column;
  align-items: center;
  white-space: nowrap;
}

.big.wide {
  width: 60px;
}

.big.slim {
  width: 36px;
}

.big svg {
  width: 32px;
  height: 32px;
  margin-bottom: 9px;
  overflow: visible;
}

.big > .arrow {
  margin-top: 4px;
}

.big span .arrow {
  margin: 0 0 3px 3px;
}

.stack {
  padding-top: 2px;
}

.stack button {
  display: flex;
  align-items: center;
  height: 25px;
  padding: 0 3px;
  white-space: nowrap;
}

.stack svg,
.glyph {
  width: 16px;
  height: 16px;
  margin-right: 4px;
}

.glyph {
  font-size: 15px;
  line-height: 15px;
}

.stack .arrow {
  margin-left: 8px;
}

.dim {
  color: #999;
}

.divider {
  width: 1px;
  margin: 16px 2px 6px 6px;
  background-color: #d9dbdd;
}

.caption {
  height: 22px;
  display: flex;
  align-items: center;
  justify-content: center;
  gap: 6px;
  background-color: #eeeff1;
  border-top: 1px solid #c8cacd;
}

/* Model tree */
main {
  flex: 1;
  min-height: 0;
  display: flex;
  padding-right: 4px;
}

aside {
  width: 403px;
  flex: none;
  padding: 13px 4px 12px;
  display: flex;
  flex-direction: column;
}

.sidetabs {
  display: flex;
  height: 30px;
  flex: none;
}

.sidetabs button {
  width: 30px;
  display: flex;
  align-items: center;
  justify-content: center;
  background-color: #eeeff1;
  border: 1px solid #c8cacd;
  border-left: none;
}

.sidetabs .active {
  color: #333;
  border-left: 1px solid #c8cacd;
  border-bottom: none;
  background-color: #fcfcfc;
  position: relative;
  z-index: 1;
}

.sidetabs svg {
  width: 18px;
  height: 20px;
}

.treebox {
  flex: 1;
  min-height: 0;
  margin-top: -1px;
  border: 1px solid #c8cacd;
  border-width: 1px 3px 2px 1px;
  display: flex;
  flex-direction: column;
}

.treehead {
  display: flex;
  align-items: center;
  gap: 8px;
  height: 28px;
  padding: 0 4px 0 20px;
  flex: none;
}

h2 {
  flex: 1;
  font-size: 13px;
  line-height: 16px;
}

.treehead svg {
  width: 20px;
  height: 20px;
}

.search {
  display: flex;
  align-items: center;
  gap: 8px;
  height: 28px;
  flex: none;
}

.field {
  width: 295px;
  height: 28px;
  padding: 2px 7px 0;
  border: 1px solid #c8cacd;
  display: flex;
}

.field input {
  flex: 1;
  height: 16px;
  border: none;
  outline: none;
  background-color: #fff;
}

.field button {
  width: 24px;
  height: 16px;
  padding-left: 10px;
}

.field svg {
  width: 10px;
  height: 10px;
}

.search > button svg {
  width: 18px;
  height: 16px;
}

.treelist {
  flex: 1;
  min-height: 0;
  display: flex;
  margin-top: 3px;
  padding: 1px 1px 0;
  border-top: 1px solid #c8cacd;
  overflow: hidden;
  position: relative;
}

table {
  flex: 1;
  height: 0;
  table-layout: fixed;
  border-collapse: separate;
  border-spacing: 0;
  color: #444;
}

th,
.corner {
  height: 22px;
  background: linear-gradient(#fbfbfb, #e9eaec);
  border-bottom: 1px solid #c8cacd;
}

th {
  border-right: 1px solid #d9dbdd;
  font-size: 13px;
  text-align: center;
  color: #555;
}

th:first-child { width: 194px; }
th:nth-child(2) { width: 104px; }
th:last-child { border-right: none; }

td {
  height: 20px;
  line-height: 20px;
  white-space: nowrap;
}

td:first-child {
  display: flex;
  align-items: center;
  border-right: 1px solid #ededef;
}

td:nth-child(2) {
  padding-left: 2px;
}

td svg {
  width: 16px;
  height: 16px;
  margin-right: 3px;
}

.l0 td:first-child { padding-left: 3px; }
.l1 td:first-child { padding-left: 5px; }
.l2 td:first-child { padding-left: 25px; }

td i {
  width: 18px;
  flex: none;
}

.open::before {
  content: "";
  display: block;
  width: 0;
  margin-left: 2px;
  border: 5px solid transparent;
  border-top: 7px solid #808080;
  border-bottom: none;
}

.shut::before {
  content: "";
  display: block;
  width: 0;
  margin-left: 4px;
  border: 4px solid transparent;
  border-left: 7px solid #808080;
  border-right: none;
}

.focus {
  line-height: 16px;
  outline: 1px dotted #000;
}

.failed td {
  color: #c01800;
  font-weight: bold;
}

.failed .mark {
  width: 8px;
  height: 8px;
  margin: -8px 1px 0 0;
}

.scroll {
  width: 17px;
  flex: none;
  display: flex;
  flex-direction: column;
}

.scroll button {
  height: 17px;
  border: 1px solid #c8cacd;
  background-color: #f4f5f6;
  display: flex;
  align-items: center;
  justify-content: center;
}

.scroll button::before {
  content: "";
  border: 4px solid transparent;
}

.scroll .up::before {
  border-top: none;
  border-bottom: 5px solid #444;
}

.scroll .down::before {
  border-bottom: none;
  border-top: 5px solid #444;
}

.track {
  flex: 1;
  background-color: #eeeff1;
  border: 1px solid #c8cacd;
  border-width: 0 1px;
}

.thumb {
  height: 80%;
  border-bottom: 1px solid #b9bcc0;
  background: linear-gradient(90deg, #fff, #e6e7e9);
  display: flex;
  align-items: center;
  justify-content: center;
}

.thumb::before {
  content: "";
  width: 7px;
  height: 11px;
  background: repeating-linear-gradient(#aaa 0 1px, transparent 1px 3px);
}

.pen {
  position: absolute;
  left: 13px;
  top: 359px;
  width: 300px;
  height: 72px;
}

/* Graphics area */
.viewport {
  flex: 1;
  background: linear-gradient(#c7dbea, #5b7ba9);
  display: flex;
  flex-direction: column;
  align-items: center;
  padding-top: 7px;
}

.viewbar {
  display: flex;
  flex: none;
  height: 28px;
  border: 1px solid #c8cacd;
  border-width: 1px 5px;
  border-left-color: #e8e9eb;
  border-right-color: #e8e9eb;
  background-color: #fff;
}

.viewbar button {
  width: 27px;
  display: flex;
  align-items: center;
  justify-content: center;
  border-left: 1px solid #c8cacd;
  position: relative;
}

.viewbar button:last-child {
  width: 28px;
  border-right: 1px solid #c8cacd;
}

.viewbar svg {
  width: 18px;
  height: 18px;
}

.viewbar .more::after {
  content: "";
  position: absolute;
  right: 1px;
  bottom: 3px;
  border-left: 4px solid transparent;
  border-bottom: 4px solid #666;
}

.viewbar .on {
  background-color: #e0e1e4;
  box-shadow: inset 0 0 0 1px #999;
}

.model {
  width: 241px;
  height: 510px;
  margin-top: 39px;
}

/* Status bar */
footer {
  display: flex;
  flex: none;
  height: 38px;
  padding: 0 19px 0 6px;
  background-color: #eeeff1;
  border-top: 2px solid #999;
}

.mini {
  width: 22px;
  height: 22px;
  margin: 10px 4px 0 0;
  border: 1px solid #c8cacd;
  display: flex;
  align-items: center;
  justify-content: center;
  color: #0c2a66;
}

.mini.on {
  border-color: #999 #bbb #eee;
  background-color: #e3e4e6;
}

.mini svg {
  width: 18px;
  height: 18px;
}

footer > .sep {
  margin: 10px 6px 4px;
}

footer p {
  flex: 1;
  padding-top: 7px;
  display: flex;
  gap: 5px;
}

.dot {
  width: 5px;
  height: 5px;
  margin-top: 5px;
  border-radius: 50%;
  background-color: #00f;
}

.status {
  display: flex;
  align-items: center;
}

.status .sep {
  align-self: stretch;
  margin: 3px 0;
}

.status .second {
  margin-left: 35px;
}

.lights {
  display: flex;
  align-items: center;
  gap: 1px;
  margin: 0 3px 0 5px;
}

.lights i {
  width: 6px;
  height: 6px;
  border-radius: 50%;
  background-color: #ccc;
}

.lights i:last-child {
  width: 10px;
  height: 10px;
  background-color: #f04040;
}

.status button {
  width: 40px;
  height: 28px;
  margin: 0 3px;
  border: 1px solid #b9bbbe;
  border-radius: 3px;
  background: linear-gradient(#fff, #eaebed);
  display: flex;
  align-items: center;
  justify-content: center;
}

.status button svg {
  width: 18px;
  height: 16px;
}

.filter {
  width: 178px;
  height: 19px;
  margin-left: 92px;
  border: 1px solid #b9bbbe;
  background: linear-gradient(#fff, #f4f4f4);
  position: relative;
}

.filter select {
  display: block;
  width: 100%;
  height: 17px;
  padding-left: 5px;
  appearance: none;
  font: inherit;
  color: #111;
  border: none;
  background: none;
}

.filter::after {
  content: "";
  position: absolute;
  right: 3px;
  top: 6px;
  border: 4px solid transparent;
  border-top: 6px solid #444;
  border-bottom: none;
}

/* Forum watermark */
.watermark {
  position: absolute;
  right: 0;
  bottom: 0;
  width: 207px;
  height: 63px;
  background-color: rgba(255, 255, 255, 0.35);
  display: flex;
  pointer-events: none;
}

.watermark svg {
  width: 60px;
  height: 62px;
}

.watermark div {
  display: flex;
  flex-direction: column;
  white-space: nowrap;
}

.watermark strong {
  padding-left: 9px;
  font-size: 29px;
  line-height: 38px;
  color: transparent;
  background: linear-gradient(#38907e 55%, #86cfa0 75%);
  background-clip: text;
}

.watermark span {
  margin-left: -2px;
  font-size: 15px;
  line-height: 20px;
  color: #b0dadc;
}
```
